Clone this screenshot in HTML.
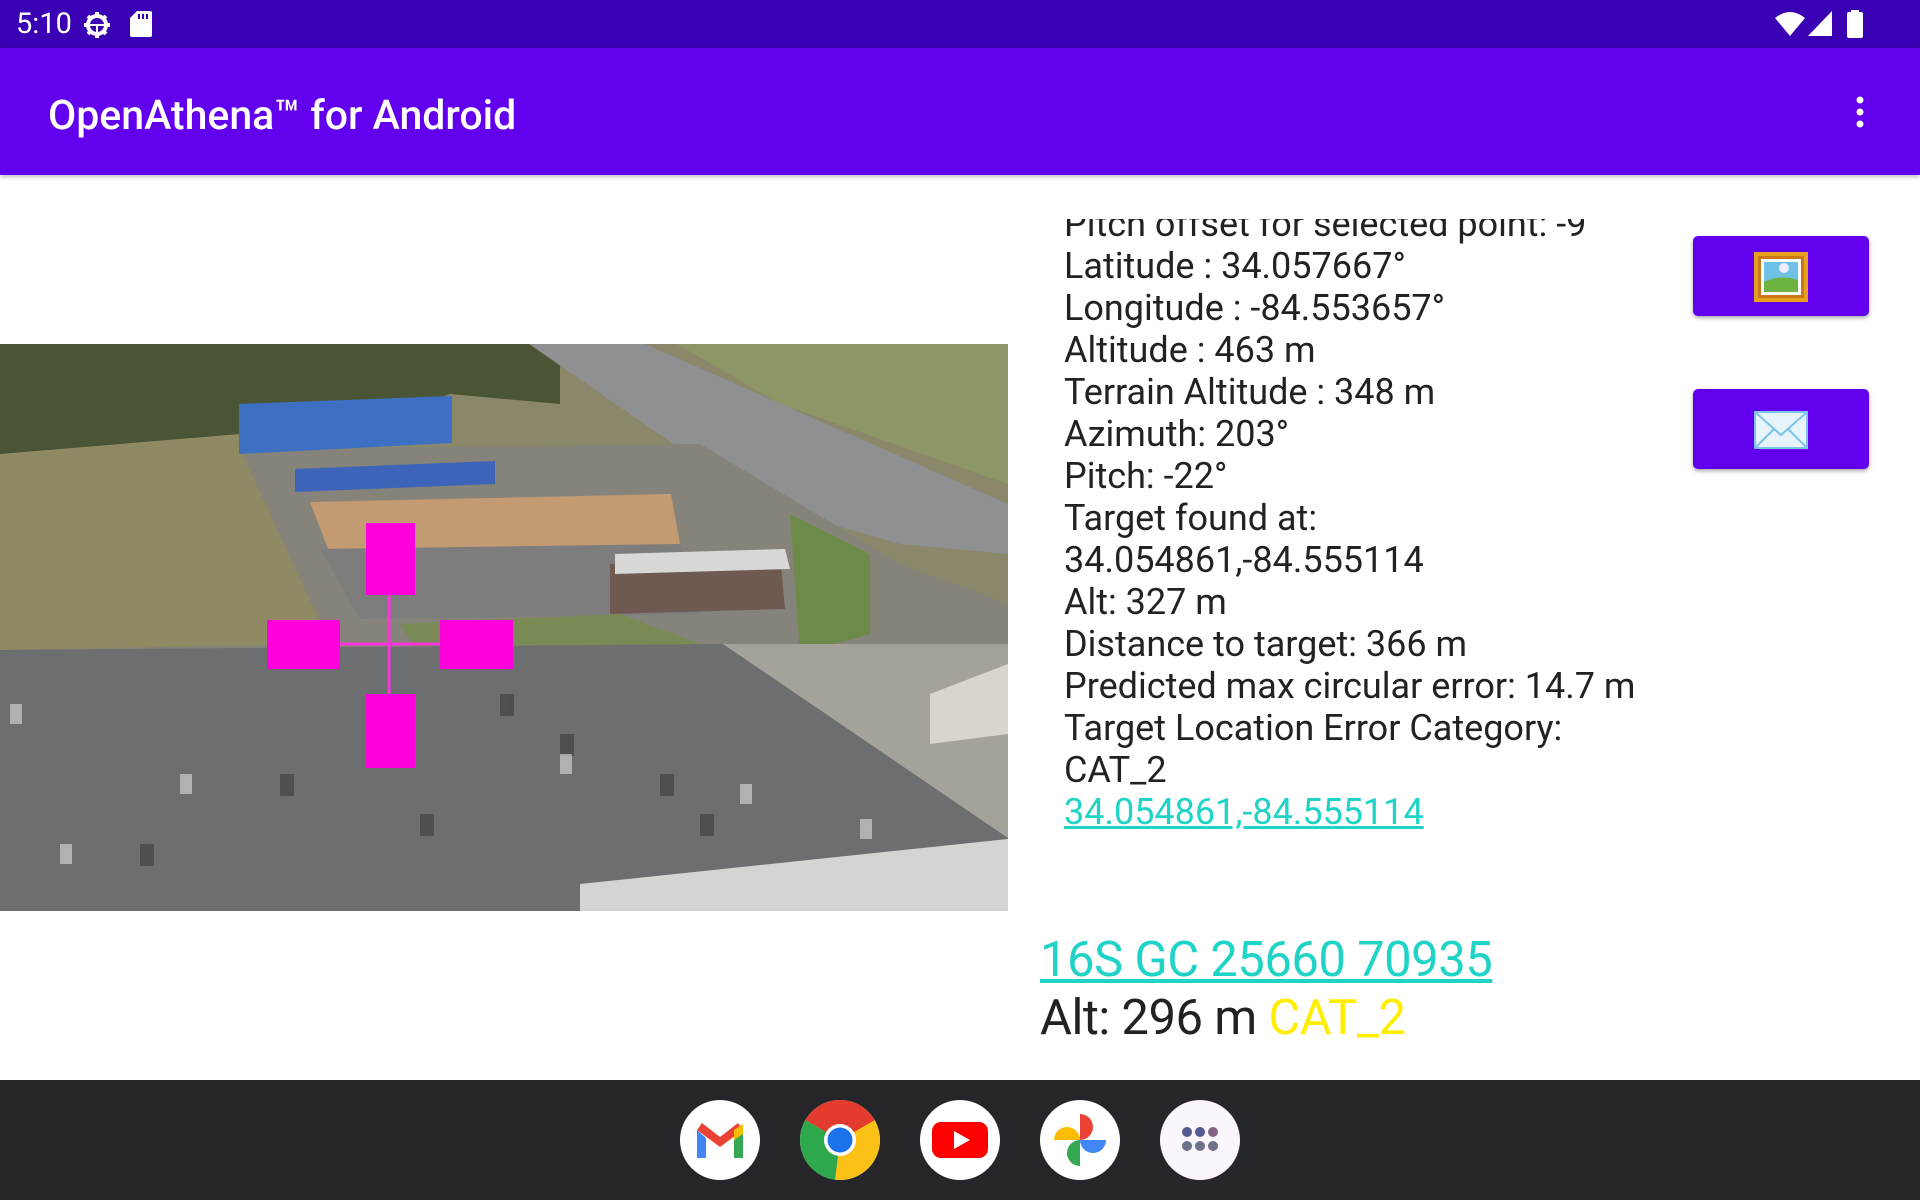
<!DOCTYPE html>
<html><head><meta charset="utf-8"><style>
*{margin:0;padding:0;box-sizing:border-box}
body{width:1920px;height:1200px;overflow:hidden;background:#fff;font-family:"Roboto","Liberation Sans",sans-serif;position:relative}
.sb{position:absolute;left:0;top:0;width:1920px;height:48px;background:#3a00b3;color:#fff}
.ab{position:absolute;left:0;top:48px;width:1920px;height:127px;background:#6200ee;box-shadow:0 2px 4px rgba(0,0,0,.25)}
.title{position:absolute;left:48px;top:44px;font-size:41px;color:#fff;font-weight:500}
.txt{position:absolute;left:1064px;top:219px;width:640px;height:620px;overflow:hidden}
.txt div{position:absolute;left:0;font-size:36px;color:#222;white-space:nowrap;line-height:42px}
.btn{position:absolute;left:1693px;width:176px;height:80px;background:#6200ee;border-radius:5px;box-shadow:0 2px 4px rgba(0,0,0,.35)}
.nav{position:absolute;left:0;top:1080px;width:1920px;height:120px;background:#26252a}
.ic{position:absolute;top:1100px;width:80px;height:80px;border-radius:50%;background:#fff;overflow:hidden}
</style></head><body>
<div class="sb">
<div style="position:absolute;left:16px;top:7px;font-size:29px">5:10</div>
<svg style="position:absolute;left:82px;top:10px" width="30" height="30" viewBox="0 0 30 30"><circle cx="15" cy="15" r="9" fill="none" stroke="#fff" stroke-width="4"/><g stroke="#fff" stroke-width="4"><line x1="15" y1="2" x2="15" y2="6"/><line x1="15" y1="24" x2="15" y2="28"/><line x1="2" y1="15" x2="6" y2="15"/><line x1="24" y1="15" x2="28" y2="15"/><line x1="6" y1="6" x2="9" y2="9"/><line x1="21" y1="21" x2="24" y2="24"/><line x1="24" y1="6" x2="21" y2="9"/><line x1="6" y1="24" x2="9" y2="21"/></g><line x1="8" y1="15" x2="22" y2="15" stroke="#fff" stroke-width="2"/><line x1="15" y1="15" x2="15" y2="23" stroke="#fff" stroke-width="2"/></svg>
<svg style="position:absolute;left:130px;top:11px" width="22" height="26" viewBox="0 0 22 26"><path d="M7 0H20a2 2 0 0 1 2 2V24a2 2 0 0 1-2 2H2a2 2 0 0 1-2-2V7z" fill="#fff"/><rect x="8" y="3" width="2" height="5" fill="#3a00b3"/><rect x="12" y="3" width="2" height="5" fill="#3a00b3"/><rect x="16" y="3" width="2" height="5" fill="#3a00b3"/></svg>
<svg style="position:absolute;left:1775px;top:11px" width="30" height="26" viewBox="0 0 30 26"><path d="M0 7Q15-5 30 7L15 25z" fill="#fff"/></svg>
<svg style="position:absolute;left:1808px;top:11px" width="24" height="25" viewBox="0 0 24 25"><path d="M24 0V25H0z" fill="#fff"/></svg>
<svg style="position:absolute;left:1847px;top:10px" width="16" height="28" viewBox="0 0 16 28"><rect x="4" y="0" width="8" height="3" fill="#fff"/><rect x="0" y="2" width="16" height="26" rx="2" fill="#fff"/></svg>
</div>
<div class="ab"><div class="title">OpenAthena™ for Android</div>
<svg style="position:absolute;left:1852px;top:46px" width="16" height="36"><circle cx="8" cy="6" r="3.5" fill="#fff"/><circle cx="8" cy="18" r="3.5" fill="#fff"/><circle cx="8" cy="30" r="3.5" fill="#fff"/></svg></div>

<svg style="position:absolute;left:0;top:344px" width="1008" height="567" viewBox="0 0 1008 567">
<rect width="1008" height="567" fill="#7d7e78"/>
<rect width="1008" height="320" fill="#8a876a"/>
<polygon points="0,0 560,0 560,60 450,50 290,110 0,118" fill="#4a5535"/>
<polygon points="0,110 240,90 330,300 0,306" fill="#8f8a64"/>
<polygon points="677,0 1008,0 1008,140 780,60" fill="#8d9666"/>
<polygon points="529,0 645,0 1008,160 1008,210 900,200 760,160" fill="#8e9091"/>
<polygon points="240,105 700,100 900,220 1008,260 1008,310 0,310 0,306 330,300" fill="#85837a"/>
<polygon points="310,158 671,150 680,200 330,210" fill="#c39a72"/>
<polygon points="320,205 680,200 700,270 360,275" fill="#7c7d7c"/>
<polygon points="400,280 620,270 700,300 420,310" fill="#7a8a55"/>
<polygon points="239,60 452,52 452,99 239,110" fill="#3d6fc2"/>
<polygon points="295,125 495,117 495,140 295,148" fill="#3d64b8"/>
<polygon points="610,220 780,210 785,265 610,270" fill="#6e5a50"/>
<polygon points="615,210 785,205 790,225 615,230" fill="#d8d8d6"/>
<polygon points="790,170 870,210 870,290 800,310" fill="#6d8a4a"/>
<polygon points="0,306 723,300 1008,494 1008,567 0,567" fill="#6d6e70"/>
<polygon points="723,300 1008,300 1008,494" fill="#a5a29b"/>
<polygon points="930,350 1008,320 1008,390 930,400" fill="#d9d4cc"/>
<polygon points="580,540 1008,495 1008,567 580,567" fill="#d4d4d2"/>
<g fill="#3a3a3d" opacity=".6"><rect x="280" y="430" width="14" height="22"/><rect x="420" y="470" width="14" height="22"/><rect x="660" y="430" width="14" height="22"/><rect x="700" y="470" width="14" height="22"/><rect x="140" y="500" width="14" height="22"/><rect x="500" y="350" width="14" height="22"/><rect x="560" y="390" width="14" height="22"/></g>
<g fill="#ddd" opacity=".6"><rect x="10" y="360" width="12" height="20"/><rect x="180" y="430" width="12" height="20"/><rect x="560" y="410" width="12" height="20"/><rect x="740" y="440" width="12" height="20"/><rect x="860" y="475" width="12" height="20"/><rect x="60" y="500" width="12" height="20"/></g>
<line x1="389" y1="251" x2="389" y2="356" stroke="#ff33dd" stroke-width="3"/>
<line x1="340" y1="300" x2="440" y2="300" stroke="#ff33dd" stroke-width="3"/>
<rect x="366" y="179" width="49" height="72" fill="#ff00dd"/>
<rect x="366" y="350" width="49" height="74" fill="#ff00dd"/>
<rect x="267" y="276" width="73" height="49" fill="#ff00dd"/>
<rect x="440" y="276" width="73" height="49" fill="#ff00dd"/>
</svg>

<div class="txt">
<div style="top:-16px">Pitch offset for selected point: -9</div>
<div style="top:26px">Latitude : 34.057667°</div>
<div style="top:68px">Longitude : -84.553657°</div>
<div style="top:110px">Altitude : 463 m</div>
<div style="top:152px">Terrain Altitude : 348 m</div>
<div style="top:194px">Azimuth: 203°</div>
<div style="top:236px">Pitch: -22°</div>
<div style="top:278px">Target found at:</div>
<div style="top:320px">34.054861,-84.555114</div>
<div style="top:362px">Alt: 327 m</div>
<div style="top:404px">Distance to target: 366 m</div>
<div style="top:446px">Predicted max circular error: 14.7 m</div>
<div style="top:488px">Target Location Error Category:</div>
<div style="top:530px">CAT_2</div>
<div style="top:572px;color:#1fd3c6;text-decoration:underline">34.054861,-84.555114</div>
</div>

<div class="btn" style="top:236px"><svg style="position:absolute;left:61px;top:16px" width="54" height="50" viewBox="0 0 54 50"><rect x="0" y="0" width="54" height="50" fill="#e8a11d"/><rect x="4" y="4" width="46" height="42" fill="#c9781a"/><rect x="7" y="7" width="40" height="36" fill="#fff"/><rect x="10" y="10" width="34" height="30" fill="#6fc2e6"/><path d="M10 30Q25 22 44 28V40H10z" fill="#6db33f"/><circle cx="30" cy="16" r="5" fill="#eef"/></svg></div>
<div class="btn" style="top:389px"><svg style="position:absolute;left:61px;top:22px" width="54" height="38" viewBox="0 0 54 38"><rect x="1" y="1" width="52" height="36" fill="#e8f4fc" stroke="#7cc4ee" stroke-width="2"/><path d="M1 1L27 24L53 1M1 37L20 18M53 37L34 18" fill="none" stroke="#7cc4ee" stroke-width="2"/></svg></div>

<div style="position:absolute;left:1040px;top:931px;font-size:49px;color:#1fd3c6;text-decoration:underline;letter-spacing:-0.5px;white-space:nowrap">16S GC 25660 70935</div>
<div style="position:absolute;left:1040px;top:989px;font-size:49px;color:#222;letter-spacing:-0.5px;white-space:nowrap">Alt: 296 m <span style="color:#ffee00">CAT_2</span></div>

<div class="nav"></div>
<div class="ic" style="left:680px"><svg width="80" height="80" viewBox="0 0 80 80"><path d="M17 30V58h9V38z" fill="#4285f4"/><path d="M54 38V58h9V30z" fill="#34a853"/><path d="M17 30L40 47L63 30L58 23L40 37L22 23z" fill="#ea4335"/><path d="M54 30L63 24V34L54 40z" fill="#fbbc04"/></svg></div>
<div class="ic" style="left:800px"><svg width="80" height="80" viewBox="0 0 80 80"><circle cx="40" cy="40" r="40" fill="#fbc116"/><path d="M40 40L5 20A40 40 0 0 1 75 20z" fill="#e33b2e"/><path d="M40 40L5 20A40 40 0 0 0 35 80z" fill="#2da84c"/><circle cx="40" cy="40" r="16" fill="#fff"/><circle cx="40" cy="40" r="12.5" fill="#1a73e8"/></svg></div>
<div class="ic" style="left:920px"><svg width="80" height="80" viewBox="0 0 80 80"><rect x="12" y="22" width="56" height="36" rx="9" fill="#ff0000"/><path d="M34 31V49L50 40z" fill="#fff"/></svg></div>
<div class="ic" style="left:1040px"><svg width="80" height="80" viewBox="0 0 80 80"><path d="M40 40V14A13 13 0 0 1 40 40z" fill="#ea4335"/><path d="M40 40H66A13 13 0 0 1 40 40z" fill="#4285f4"/><path d="M40 40V66A13 13 0 0 1 40 40z" fill="#34a853"/><path d="M40 40H14A13 13 0 0 1 40 40z" fill="#fbbc04"/></svg></div>
<div class="ic" style="left:1160px;background:#fbf6fd"><svg width="80" height="80" viewBox="0 0 80 80"><g fill="#555a8e"><circle cx="27" cy="32" r="5"/><circle cx="40" cy="32" r="5"/></g><circle cx="53" cy="32" r="5" fill="#846383"/><g fill="#6f7186"><circle cx="27" cy="46" r="5"/><circle cx="40" cy="46" r="5"/><circle cx="53" cy="46" r="5"/></g></svg></div>
</body></html>
